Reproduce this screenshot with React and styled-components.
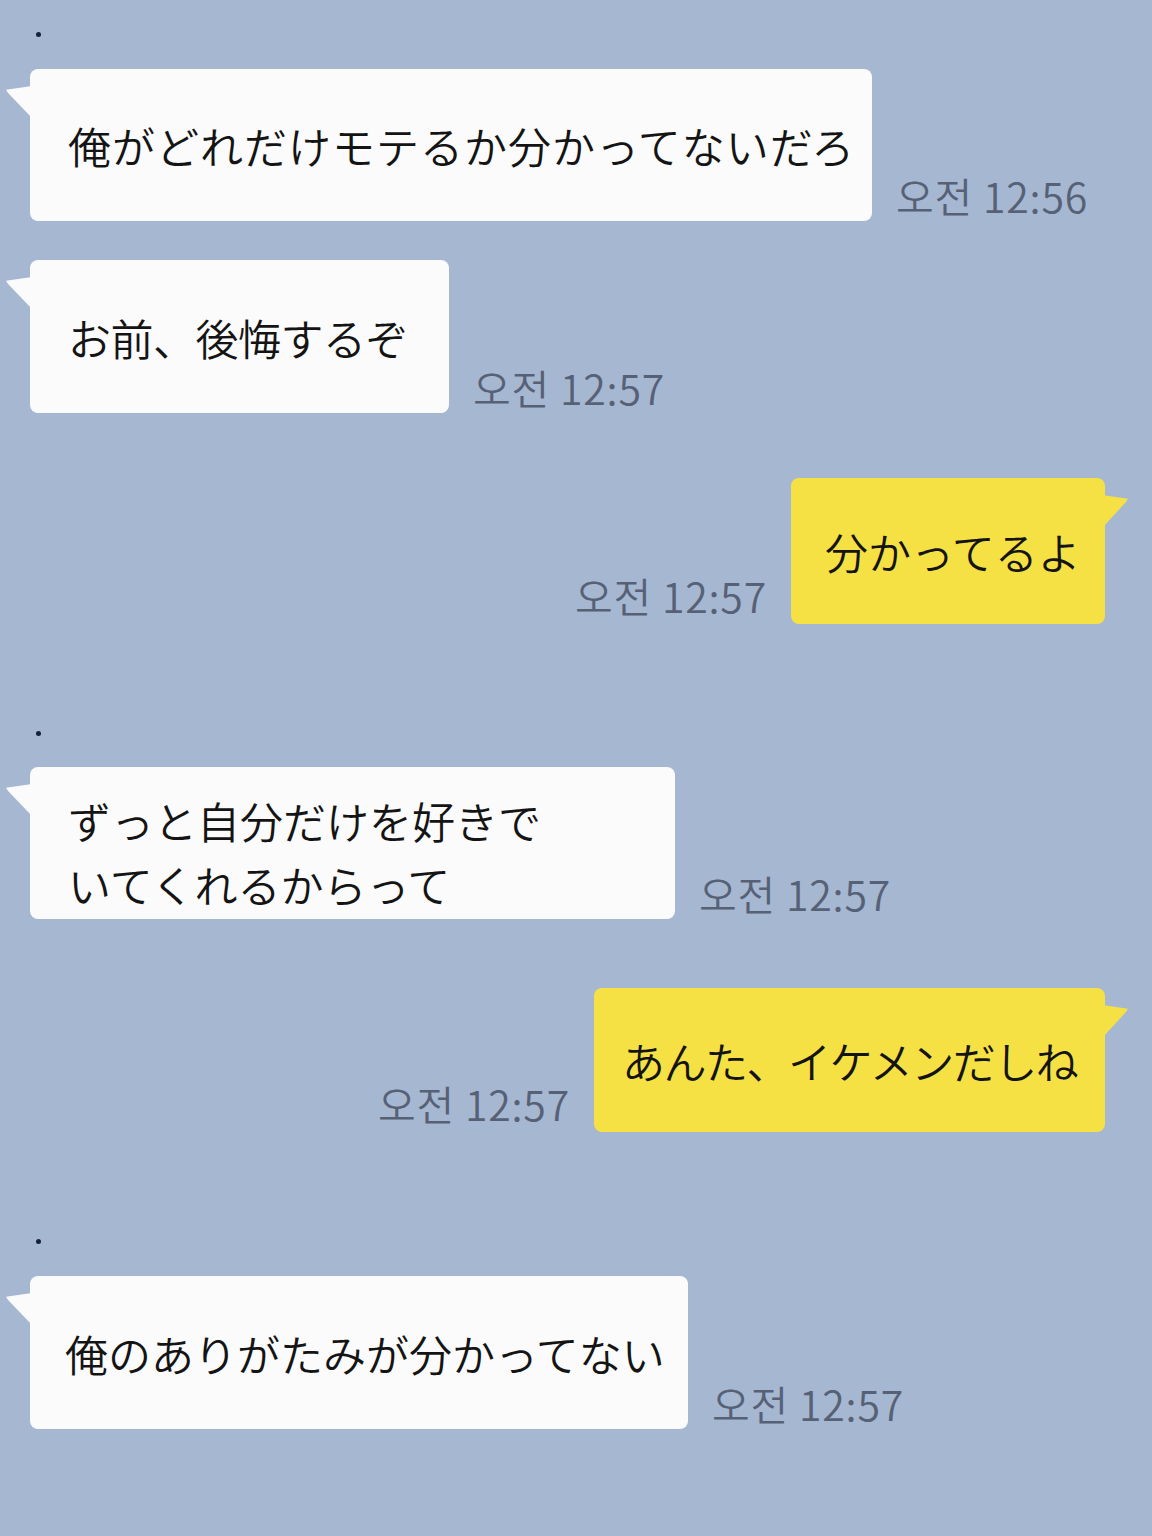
import React from "react"
import styled, { createGlobalStyle, css } from 'styled-components'

const GlobalStyle = createGlobalStyle`
  html, body {
    margin: 0;
    padding: 0;
    background: #a6b7d1;
  }
  body {
    font-family: "Noto Sans CJK JP", "Noto Sans", sans-serif;
  }
`

const ChatScreen = styled.div`
  width: 1152px;
  height: 1536px;
  overflow: hidden;
  background: #a6b7d1;
  display: flex;
  flex-direction: column;
  padding: 0 47px 0 30px;
  box-sizing: border-box;
`

const Dot = styled.div`
  width: 5px;
  height: 5px;
  border-radius: 50%;
  background: #16203a;
  margin-top: ${(props) => props.top}px;
  margin-left: 6px;
`

const Row = styled.div`
  display: flex;
  align-items: flex-end;
  gap: 24px;
  margin-top: ${(props) => props.top}px;
  flex-direction: ${(props) => (props.mine ? 'row-reverse' : 'row')};
`

const Bubble = styled.div`
  position: relative;
  box-sizing: border-box;
  display: flex;
  align-items: center;
  flex-shrink: 0;
  width: ${(props) => props.w}px;
  height: ${(props) => props.h}px;
  padding: ${(props) => (props.lines > 1 ? 18 : 0)}px 0 0 ${(props) => props.pad}px;
  border-radius: 8px;
  background: ${(props) => (props.mine ? '#f6e145' : '#fbfbfb')};
  color: #141414;
  font-size: 43px;
  font-weight: 350;
  line-height: ${(props) => (props.lines > 1 ? '64px' : '60px')};
  white-space: nowrap;
  letter-spacing: ${(props) => props.spacing}px;

  &::before {
    content: '';
    position: absolute;
    top: 17px;
    width: 26px;
    height: 32px;
    background: inherit;
    ${(props) =>
      props.mine
        ? css`
            right: -23px;
            clip-path: polygon(0 0, 100% 12%, 92% 22%, 4% 100%);
          `
        : css`
            left: -24px;
            clip-path: polygon(100% 0, 0 12%, 8% 22%, 100% 100%);
          `}
  }
`

const Time = styled.span`
  font-family: "Noto Sans CJK KR", "Noto Sans", sans-serif;
  font-size: 41px;
  font-weight: 350;
  line-height: 48px;
  letter-spacing: 0.8px;
  color: #566176;
  white-space: nowrap;
  margin-bottom: ${(props) => (props.mine ? 5 : 2)}px;
`

const items = [
  { type: 'dot', top: 32 },
  { type: 'msg', top: 32, w: 842, h: 152, pad: 38, spacing: 1, lines: ['俺がどれだけモテるか分かってないだろ'], time: '오전 12:56' },
  { type: 'msg', top: 39, w: 419, h: 153, pad: 38, spacing: -0.5, lines: ['お前、後悔するぞ'], time: '오전 12:57' },
  { type: 'msg', top: 65, w: 314, h: 146, pad: 34, spacing: 0, mine: true, lines: ['分かってるよ'], time: '오전 12:57' },
  { type: 'dot', top: 107 },
  { type: 'msg', top: 31, w: 645, h: 152, pad: 38, spacing: 0, lines: ['ずっと自分だけを好きで', 'いてくれるからって'], time: '오전 12:57' },
  { type: 'msg', top: 69, w: 511, h: 144, pad: 28, spacing: -1.5, mine: true, lines: ['あんた、イケメンだしね'], time: '오전 12:57' },
  { type: 'dot', top: 107 },
  { type: 'msg', top: 32, w: 658, h: 153, pad: 35, spacing: 0, lines: ['俺のありがたみが分かってない'], time: '오전 12:57' },
]

function App() {
  return (
    <>
      <GlobalStyle />
      <ChatScreen>
        {items.map((item, i) =>
          item.type === 'dot' ? (
            <Dot key={i} top={item.top} />
          ) : (
            <Row key={i} top={item.top} mine={item.mine}>
              <Bubble
                w={item.w}
                h={item.h}
                pad={item.pad}
                spacing={item.spacing}
                mine={item.mine}
                lines={item.lines.length}
              >
                <div>
                  {item.lines.map((line, j) => (
                    <div key={j}>{line}</div>
                  ))}
                </div>
              </Bubble>
              <Time mine={item.mine}>{item.time}</Time>
            </Row>
          )
        )}
      </ChatScreen>
    </>
  )
}

export default App
